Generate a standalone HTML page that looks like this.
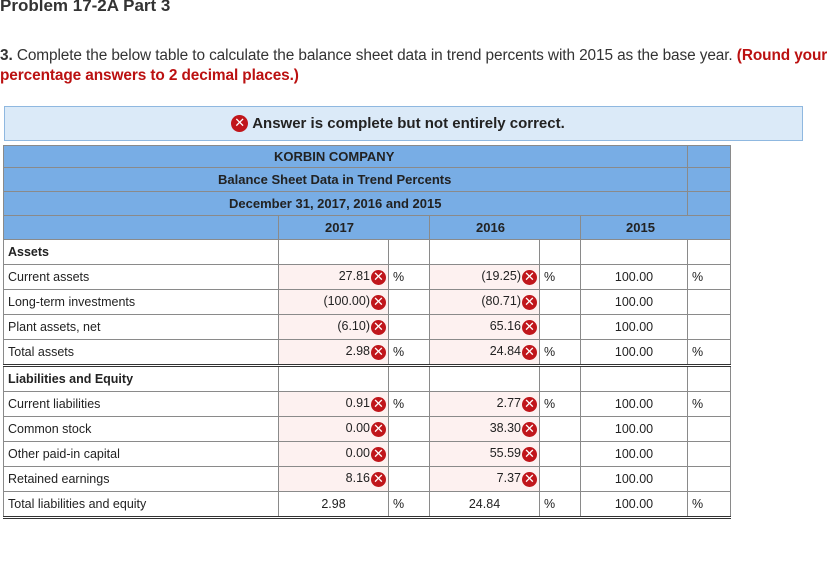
<!DOCTYPE html>
<html><head><style>
body{margin:0;background:#fff;font-family:"Liberation Sans",Arial,sans-serif;width:827px;height:575px;overflow:hidden;position:relative;color:#222}
.t{position:absolute;left:0;top:-4px;font-size:17px;font-weight:bold;color:#333;white-space:nowrap}
.q{position:absolute;left:0;top:46px;font-size:15.4px;line-height:20px;width:900px;color:#333;white-space:nowrap;letter-spacing:-0.1px}
.q b{color:#b11}
.ab{position:absolute;left:4px;top:106px;width:799px;height:35px;background:#dbeaf8;border:1px solid #8fb8e0;box-sizing:border-box;font-size:15px;font-weight:bold;text-align:center;line-height:34px;color:#222;padding-right:12px}
.x{display:inline-block;width:15px;height:15px;border-radius:50%;background:#c0161b;color:#fff;font-size:13px;font-weight:bold;line-height:15px;text-align:center;vertical-align:middle;margin-left:1px;font-family:"DejaVu Sans",sans-serif;letter-spacing:0}
.ab .x{width:17px;height:17px;line-height:17px;margin-right:4px;position:relative;top:-1px}
table{position:absolute;left:3px;top:145px;border-collapse:collapse;table-layout:fixed;font-size:12.5px}
td{border:1px solid #8a8a8a;padding:0 4px;height:24px;white-space:nowrap;overflow:hidden}
.h td{background:#78ade5;text-align:center;font-weight:bold;color:#222;height:23px;font-size:13px}
.h.f td{height:21px}
.r{text-align:right}
.e{background:#fdf1f0;text-align:right;padding-right:2px}
.c{text-align:center}
.bb td{border-bottom:3px double #333}
.tt td{border-top:1.5px solid #111}
.b{font-weight:bold}
</style></head><body>
<div class="t">Problem 17-2A Part 3</div>
<div class="q"><b style="color:#333">3.</b> Complete the below table to calculate the balance sheet data in trend percents with 2015 as the base year. <b>(Round your</b><br><b>percentage answers to 2 decimal places.)</b></div>
<div class="ab"><span class="x">✕</span>Answer is complete but not entirely correct.</div>
<table>
<colgroup><col style="width:275px"><col style="width:110px"><col style="width:41px"><col style="width:110px"><col style="width:41px"><col style="width:107px"><col style="width:43px"></colgroup>
<tr class="h f"><td colspan="6" style="padding-left:270px;text-align:left">KORBIN COMPANY</td><td></td></tr>
<tr class="h"><td colspan="6" style="text-align:left;padding-left:214px">Balance Sheet Data in Trend Percents</td><td></td></tr>
<tr class="h"><td colspan="6" style="text-align:left;padding-left:225px">December 31, 2017, 2016 and 2015</td><td></td></tr>
<tr class="h"><td></td><td colspan="2" style="text-align:left;padding-left:46px">2017</td><td colspan="2" style="text-align:left;padding-left:46px">2016</td><td colspan="2" style="text-align:left;padding-left:45px">2015</td></tr>
<tr><td class="b">Assets</td><td></td><td></td><td></td><td></td><td></td><td></td></tr>
<tr><td>Current assets</td><td class="e">27.81<span class="x">✕</span></td><td>%</td><td class="e">(19.25)<span class="x">✕</span></td><td>%</td><td class="c">100.00</td><td>%</td></tr>
<tr><td>Long-term investments</td><td class="e">(100.00)<span class="x">✕</span></td><td></td><td class="e">(80.71)<span class="x">✕</span></td><td></td><td class="c">100.00</td><td></td></tr>
<tr><td>Plant assets, net</td><td class="e">(6.10)<span class="x">✕</span></td><td></td><td class="e">65.16<span class="x">✕</span></td><td></td><td class="c">100.00</td><td></td></tr>
<tr class="bb tt"><td>Total assets</td><td class="e">2.98<span class="x">✕</span></td><td>%</td><td class="e">24.84<span class="x">✕</span></td><td>%</td><td class="c">100.00</td><td>%</td></tr>
<tr><td class="b">Liabilities and Equity</td><td></td><td></td><td></td><td></td><td></td><td></td></tr>
<tr><td>Current liabilities</td><td class="e">0.91<span class="x">✕</span></td><td>%</td><td class="e">2.77<span class="x">✕</span></td><td>%</td><td class="c">100.00</td><td>%</td></tr>
<tr><td>Common stock</td><td class="e">0.00<span class="x">✕</span></td><td></td><td class="e">38.30<span class="x">✕</span></td><td></td><td class="c">100.00</td><td></td></tr>
<tr><td>Other paid-in capital</td><td class="e">0.00<span class="x">✕</span></td><td></td><td class="e">55.59<span class="x">✕</span></td><td></td><td class="c">100.00</td><td></td></tr>
<tr><td>Retained earnings</td><td class="e">8.16<span class="x">✕</span></td><td></td><td class="e">7.37<span class="x">✕</span></td><td></td><td class="c">100.00</td><td></td></tr>
<tr class="bb tt"><td>Total liabilities and equity</td><td class="c">2.98</td><td>%</td><td class="c">24.84</td><td>%</td><td class="c">100.00</td><td>%</td></tr>
</table>
</body></html>
